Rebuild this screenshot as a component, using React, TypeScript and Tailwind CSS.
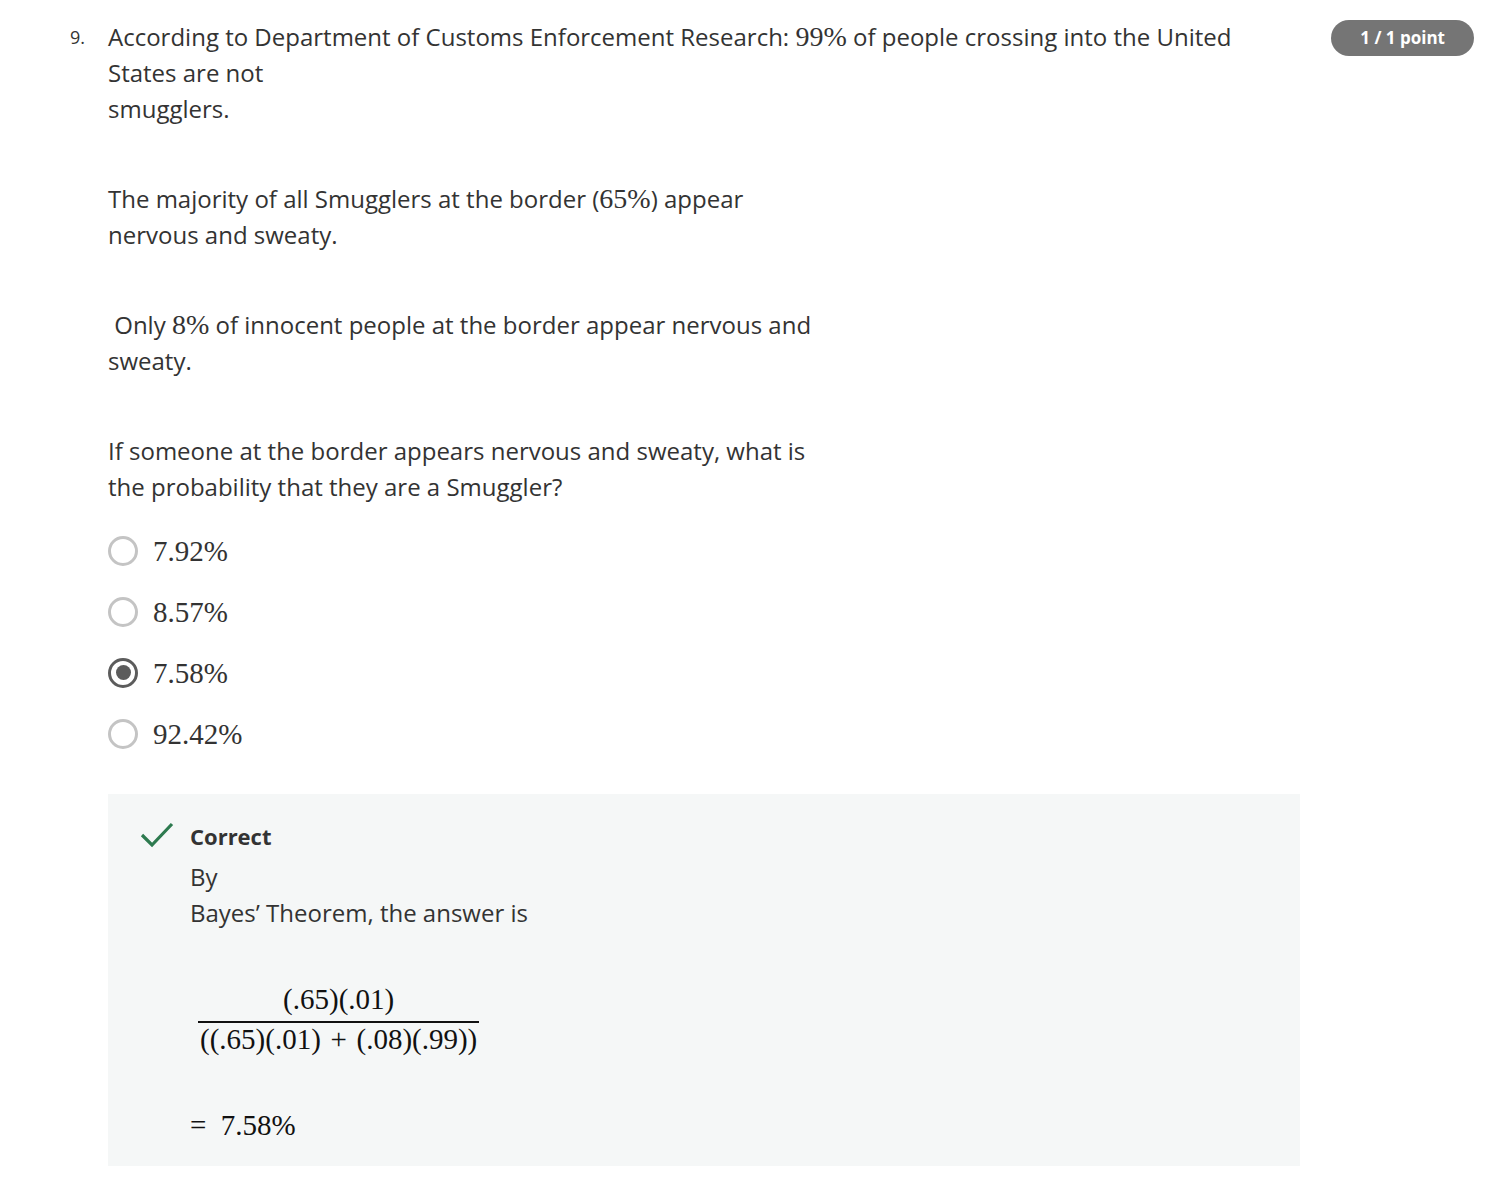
import React from "react";

const sans = { fontFamily: '"Open Sans", "Noto Sans", sans-serif' };
const serif = { fontFamily: '"Liberation Serif", "DejaVu Serif", serif' };

function M({ children, className = "" }: { children: React.ReactNode; className?: string }) {
  return (
    <span style={serif} className={`text-[28px] ${className}`}>
      {children}
    </span>
  );
}

function Radio({ checked }: { checked?: boolean }) {
  return checked ? (
    <span className="flex h-[30px] w-[30px] items-center justify-center rounded-full border-[3px] border-[#5c5c5c]">
      <span className="h-[15px] w-[15px] rounded-full bg-[#5c5c5c]" />
    </span>
  ) : (
    <span className="block h-[30px] w-[30px] rounded-full border-[3px] border-[#c4c4c4]" />
  );
}

export default function App() {
  const options = [
    { v: "7.92%", c: false },
    { v: "8.57%", c: false },
    { v: "7.58%", c: true },
    { v: "92.42%", c: false },
  ];
  return (
    <div style={sans} className="min-h-[1182px] bg-white text-[#333333]">
      <div className="flex pl-[70px] pr-[26px] pt-[19px]">
        <div className="w-[38px] pt-[4px] text-[18px] leading-[28px]">9.</div>
        <div className="flex-1 text-[24px] leading-[36px]">
          <p>
            According to Department of Customs Enforcement Research: <M>99%</M> of people crossing into the United
            <br />
            States are not
            <br />
            smugglers.
          </p>
          <p className="mt-[54px]">
            The majority of all Smugglers at the border (<M>65%</M>) appear
            <br />
            nervous and sweaty.
          </p>
          <p className="mt-[54px]">
            &nbsp;Only <M>8%</M> of innocent people at the border appear nervous and
            <br />
            sweaty.
          </p>
          <p className="mt-[54px]">
            If someone at the border appears nervous and sweaty, what is
            <br />
            the probability that they are a Smuggler?
          </p>
          <div className="mt-[15px] flex flex-col">
            {options.map((o) => (
              <div key={o.v} className="flex h-[61px] items-center gap-[15px]">
                <Radio checked={o.c} />
                <span style={serif} className="text-[29px] leading-[36px]">
                  {o.v}
                </span>
              </div>
            ))}
          </div>
          <div className="mt-[30px] w-[1192px] bg-[#f5f7f7] pb-[23px] pl-[32px] pt-[24px]">
            <div className="flex">
              <svg width="34" height="30" viewBox="0 0 34 30" className="mt-[2px]">
                <path d="M2 15 L12 25 L32 4" fill="none" stroke="#2d7a4f" strokeWidth="3.2" />
              </svg>
              <div className="ml-[16px]">
                <div className="text-[22px] font-bold leading-[36px] text-[#333]">Correct</div>
                <div className="mt-[5px] leading-[36px]">By</div>
                <div className="leading-[36px]">Bayes’ Theorem, the answer is</div>
                <div style={serif} className="mt-[52px] ml-[8px] inline-flex flex-col items-center text-[29px] text-[#111]">
                  <div className="px-[2px] leading-[32px]">(.65)(.01)</div>
                  <div className="mt-[6px] h-[2px] w-full bg-[#111]" />
                  <div className="px-[2px] leading-[32px]">
                    ((.65)(.01)&#8196;+&#8196;(.08)(.99))
                  </div>
                </div>
                <div style={serif} className="mt-[52px] text-[29px] leading-[36px] text-[#111]">
                  =&ensp;7.58%
                </div>
              </div>
            </div>
          </div>
        </div>
        <div className="ml-[20px] pt-[1px]">
          <div className="flex h-[36px] items-center rounded-full bg-[#757575] px-[29px] text-[17px] font-bold text-white">
            1 / 1 point
          </div>
        </div>
      </div>
    </div>
  );
}
